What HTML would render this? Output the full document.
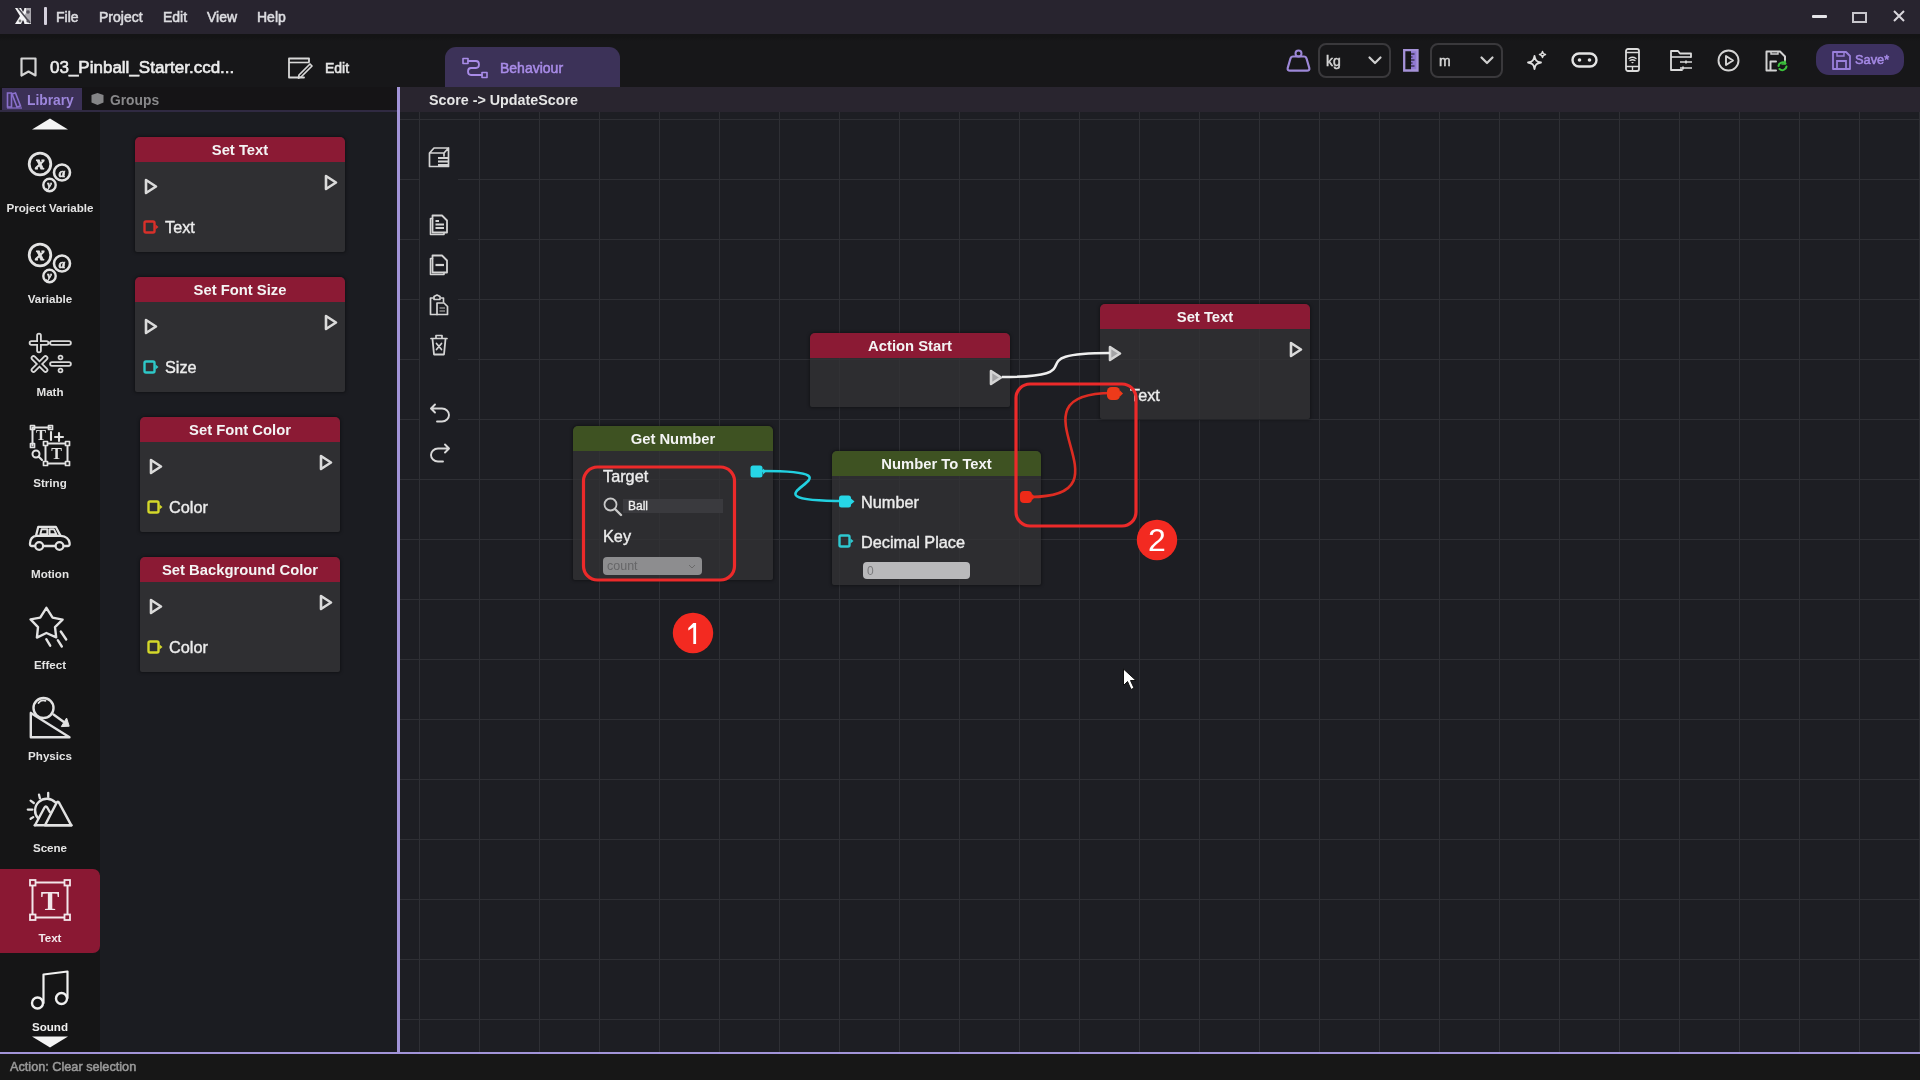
<!DOCTYPE html>
<html><head><meta charset="utf-8">
<style>
*{margin:0;padding:0;box-sizing:border-box}
html,body{width:1920px;height:1080px;overflow:hidden;background:#151416;font-family:"Liberation Sans",sans-serif;color:#e8e8e8}
body{-webkit-font-smoothing:antialiased}
#root{position:absolute;left:0;top:0;width:1920px;height:1080px;will-change:transform}
.a{position:absolute}
svg{position:absolute;overflow:visible}
#title{left:0;top:0;width:1920px;height:34px;background:#28242f}
.menu{top:9px;font-size:14px;line-height:16px;color:#dcdce0;-webkit-text-stroke:0.55px #dcdce0}
#toolbar{left:0;top:33px;width:1920px;height:54px;background:linear-gradient(#28242f 0,#28242f 1px,#141415 1px,#141415 4px,#171719 8px)}
#canvas{left:400px;top:87px;width:1520px;height:965px;background:#1d1e23;overflow:hidden}
#grid{left:0;top:0;width:1520px;height:965px;
 background-image:linear-gradient(to right,#2e2f34 0,#2e2f34 1px,transparent 1px),linear-gradient(to bottom,#2e2f34 0,#2e2f34 1px,transparent 1px);
 background-size:60px 60px;background-position:19px 32px}
#chead{left:0;top:0;width:1520px;height:25px;background:#29252f}
#side{left:0;top:112px;width:100px;height:940px;background:#151516;overflow:hidden}
#panel{left:100px;top:112px;width:297px;height:940px;background:#1b1c21}
#tabs{left:0;top:87px;width:397px;height:25px;background:#151416}
#vline{left:397px;top:87px;width:3px;height:966px;background:#a294d8}
#hline{left:0;top:1052px;width:1920px;height:2px;background:#a294d8}
#status{left:0;top:1054px;width:1920px;height:26px;background:#171717}
.node{position:absolute;background:#2f2f32;border-radius:5px 5px 2px 2px;overflow:hidden;box-shadow:0 0 3px 1px rgba(0,0,0,0.35)}
.nh{position:absolute;left:0;top:0;width:100%;height:25px;text-align:center;font-weight:bold;font-size:14.8px;line-height:26px;color:#f4f4f4}
.red{background:#8b1a34}
.grn{background:#3e5222}
.lbl{position:absolute;font-size:16.3px;line-height:18px;color:#ececec;-webkit-text-stroke:0.4px #ececec}
.sl{position:absolute;left:0;width:100px;text-align:center;font-size:11.6px;line-height:13px;font-weight:bold;color:#e4e4e4}
.ic{fill:none;stroke-linecap:round;stroke-linejoin:round}
.icf{stroke-linecap:round;stroke-linejoin:round}
</style></head><body><div id="root">
<div id="title" class="a">
 <svg style="left:14px;top:7px" width="18" height="18" viewBox="0 0 18 18">
  <rect x="10" y="1" width="7" height="16" fill="#a9a7ad"/>
  <path d="M1 1 L7 1 L9 5 L11 1 L12 1 L12 6 L10 9 L17 17 L11 17 L9 13 L7 17 L1 17 L6 9 Z" fill="#f4f4f6"/>
  <path d="M4 1 L16 16" stroke="#4a4850" stroke-width="1.6"/>
  <circle cx="14" cy="5" r="1.8" fill="#55525c"/><circle cx="14" cy="14" r="1.6" fill="#55525c"/><circle cx="6" cy="14" r="1.4" fill="#777"/>
 </svg>
 <div class="a" style="left:44px;top:7px;width:3px;height:18px;background:#d4d0dc;border-radius:1px"></div>
 <div class="a menu" style="left:56px">File</div>
 <div class="a menu" style="left:99px">Project</div>
 <div class="a menu" style="left:163px">Edit</div>
 <div class="a menu" style="left:207px">View</div>
 <div class="a menu" style="left:257px">Help</div>
 <div class="a" style="left:1812px;top:15px;width:15px;height:3px;background:#e4e4e8;border-radius:1px"></div>
 <div class="a" style="left:1852px;top:12px;width:15px;height:11px;border:2px solid #c8c6cc"></div>
 <svg style="left:1893px;top:10px" width="12" height="12" viewBox="0 0 12 12"><path d="M1 1L11 11M11 1L1 11" stroke="#d8d6dc" stroke-width="2"/></svg>
</div>
<div id="toolbar" class="a">
 <svg style="left:20px;top:24px" width="17" height="20" viewBox="0 0 17 20"><path d="M1.5 1.5H15.5V18.5L8.5 14.5L1.5 18.5Z" class="ic" stroke="#d4d4d4" stroke-width="2.2"/></svg>
 <div class="a" style="left:50px;top:25px;font-size:17px;line-height:20px;color:#ececec;-webkit-text-stroke:0.6px #ececec">03_Pinball_Starter.ccd...</div>
 <svg style="left:287px;top:23px" width="26" height="24" viewBox="0 0 26 24">
  <path d="M17 21.5H2V2.5H22V6" class="ic" stroke="#d8d8d8" stroke-width="1.8"/>
  <path d="M2 6.5H22" stroke="#d8d8d8" stroke-width="1.6"/>
  <path d="M12 19L23 8L25 10L14 21L11.5 22Z" class="ic" stroke="#d8d8d8" stroke-width="1.7"/>
 </svg>
 <div class="a" style="left:325px;top:27px;font-size:14px;line-height:16px;color:#e6e6e6;-webkit-text-stroke:0.55px #e6e6e6">Edit</div>
 <div class="a" style="left:445px;top:14px;width:175px;height:40px;background:#3c3258;border-radius:11px 11px 0 0"></div>
 <svg style="left:462px;top:24px" width="26" height="22" viewBox="0 0 26 22">
  <rect x="1" y="1.5" width="5" height="5" class="ic" stroke="#a98ce8" stroke-width="1.6"/>
  <rect x="20" y="15.5" width="5" height="5" class="ic" stroke="#a98ce8" stroke-width="1.6"/>
  <path d="M6 4H14C18 4 18 11 14 11H9C5 11 5 18 9 18H20" class="ic" stroke="#a98ce8" stroke-width="1.8"/>
 </svg>
 <div class="a" style="left:500px;top:27px;font-size:14px;line-height:16px;color:#a98ce8;-webkit-text-stroke:0.5px #a98ce8">Behaviour</div>

 <svg style="left:1287px;top:16px" width="24" height="23" viewBox="0 0 24 23">
  <circle cx="11.5" cy="4.6" r="3" fill="none" stroke="#9d88d8" stroke-width="2"/>
  <path d="M6 7.5H17C18.5 7.5 19.2 8.3 19.6 9.7L22.3 19C22.7 20.8 21.8 21.6 20 21.6H3C1.2 21.6 0.3 20.8 0.7 19L3.4 9.7C3.8 8.3 4.5 7.5 6 7.5Z" fill="none" stroke="#9d88d8" stroke-width="2.2" stroke-linejoin="round"/>
 </svg>
 <div class="a" style="left:1318px;top:10px;width:73px;height:35px;border:2px solid #3a393c;border-radius:8px"></div>
 <div class="a" style="left:1326px;top:20px;font-size:14px;line-height:16px;color:#d4d4d4;-webkit-text-stroke:0.5px #d4d4d4">kg</div>
 <svg style="left:1368px;top:23px" width="14" height="9" viewBox="0 0 14 9"><path d="M1.5 1.5L7 7L12.5 1.5" class="ic" stroke="#cfcfcf" stroke-width="2.2"/></svg>
 <svg style="left:1403px;top:16px" width="16" height="23" viewBox="0 0 16 23">
  <rect x="8" y="2" width="6.5" height="19" fill="#8f78d0"/>
  <path d="M1.2 1.2H14.5V21.5H1.2Z" fill="none" stroke="#a592d8" stroke-width="2.3"/>
  <path d="M4 5H11.5M4 8H9.5M4 11H11.5M4 14H9.5M4 17H11.5" stroke="#151416" stroke-width="1.2"/>
 </svg>
 <div class="a" style="left:1430px;top:10px;width:73px;height:35px;border:2px solid #3a393c;border-radius:8px"></div>
 <div class="a" style="left:1439px;top:20px;font-size:14px;line-height:16px;color:#d4d4d4;-webkit-text-stroke:0.5px #d4d4d4">m</div>
 <svg style="left:1480px;top:23px" width="14" height="9" viewBox="0 0 14 9"><path d="M1.5 1.5L7 7L12.5 1.5" class="ic" stroke="#cfcfcf" stroke-width="2.2"/></svg>

 <svg style="left:1526px;top:17px" width="22" height="21" viewBox="0 0 22 21">
  <path d="M8.5 6C9.2 10.5 10.5 11.8 15 12.5C10.5 13.2 9.2 14.5 8.5 19C7.8 14.5 6.5 13.2 2 12.5C6.5 11.8 7.8 10.5 8.5 6Z" class="ic" stroke="#e0e0e0" stroke-width="1.8"/>
  <path d="M16.5 1.5C16.8 3.6 17.4 4.2 19.5 4.5C17.4 4.8 16.8 5.4 16.5 7.5C16.2 5.4 15.6 4.8 13.5 4.5C15.6 4.2 16.2 3.6 16.5 1.5Z" class="ic" stroke="#e0e0e0" stroke-width="1.5"/>
 </svg>
 <svg style="left:1571px;top:19px" width="27" height="16" viewBox="0 0 27 16">
  <rect x="1.5" y="1.5" width="24" height="13" rx="6.5" class="ic" stroke="#e4e4e4" stroke-width="2.4"/>
  <circle cx="8.5" cy="8" r="1.8" fill="#e4e4e4"/><circle cx="18.5" cy="8" r="1.8" fill="#e4e4e4"/>
 </svg>
 <svg style="left:1625px;top:15px" width="15" height="24" viewBox="0 0 15 24">
  <rect x="1" y="1" width="13" height="22" rx="2" class="ic" stroke="#dcdcdc" stroke-width="1.8"/>
  <path d="M1 4.5H14M1 18.5H14M7.5 18.5V23" stroke="#dcdcdc" stroke-width="1.4"/>
  <path d="M4 10.5Q7.5 8 11 10.5M5 12.5Q7.5 11 10 12.5" class="ic" stroke="#dcdcdc" stroke-width="1.4"/>
  <path d="M6 14H9L7.5 15.5Z" fill="#dcdcdc"/>
 </svg>
 <svg style="left:1670px;top:16px" width="23" height="22" viewBox="0 0 23 22">
  <path d="M12 21H1V2H8L10 4.5H21V8" class="ic" stroke="#dcdcdc" stroke-width="1.8"/>
  <path d="M1 8H21" stroke="#dcdcdc" stroke-width="1.6"/>
  <path d="M10 13H22M10 19H22M16 11.5V14.5M13 17.5V20.5" stroke="#dcdcdc" stroke-width="1.7"/>
 </svg>
 <svg style="left:1717px;top:16px" width="23" height="23" viewBox="0 0 23 23">
  <circle cx="11.5" cy="11.5" r="10" class="ic" stroke="#d4d4d4" stroke-width="1.9"/>
  <path d="M9 7L16 11.5L9 16Z" class="ic" stroke="#d4d4d4" stroke-width="1.9"/>
 </svg>
 <svg style="left:1765px;top:17px" width="24" height="22" viewBox="0 0 24 22">
  <path d="M11 20.5H1.5V1.5H15L20 6.5V11" class="ic" stroke="#d2d2d2" stroke-width="2"/>
  <path d="M5.5 20V11.5H11" class="ic" stroke="#d2d2d2" stroke-width="2"/>
  <path d="M6 2V4H13V2" stroke="#d2d2d2" stroke-width="1.4" fill="none"/>
  <path d="M13.5 16A4.2 4.2 0 0 1 20.5 13.5M21.5 16.5A4.2 4.2 0 0 1 14.5 19" class="ic" stroke="#3cc23c" stroke-width="2"/>
  <path d="M20 11V14H17" class="ic" stroke="#3cc23c" stroke-width="1.6"/>
 </svg>
 <div class="a" style="left:1816px;top:11px;width:88px;height:31px;background:#3d3160;border-radius:13px"></div>
 <svg style="left:1832px;top:18px" width="19" height="19" viewBox="0 0 19 19">
  <path d="M1 1H14L18 5V18H1Z" class="ic" stroke="#9a80dc" stroke-width="1.8"/>
  <path d="M5 18V10H14V18" fill="none" stroke="#9a80dc" stroke-width="1.8"/>
  <path d="M5 1V5H12V1" fill="none" stroke="#9a80dc" stroke-width="1.4"/>
 </svg>
 <div class="a" style="left:1855px;top:19px;font-size:12.8px;line-height:15px;color:#a68ae6;-webkit-text-stroke:0.5px #a68ae6">Save*</div>
</div>
<div id="tabs" class="a">
 <div class="a" style="left:2px;top:1px;width:80px;height:23px;background:#3b3056"></div>
 <svg style="left:6px;top:4px" width="17" height="18" viewBox="0 0 17 18">
  <path d="M1.5 2H5.5V16H1.5Z" fill="none" stroke="#8a70cc" stroke-width="1.6"/>
  <path d="M6 3L9.5 2L14.5 15L11 16Z" fill="none" stroke="#8a70cc" stroke-width="1.6"/>
  <path d="M1 17H16" stroke="#8a70cc" stroke-width="1.2"/>
 </svg>
 <div class="a" style="left:27px;top:6px;font-size:13.8px;line-height:16px;font-weight:bold;color:#9d86dc">Library</div>
 <svg style="left:90px;top:5px" width="15" height="14" viewBox="0 0 15 14">
  <path d="M7.5 1L13.5 3V10.5L7.5 13L1.5 10.5V3Z" fill="#858587"/>
 </svg>
 <div class="a" style="left:110px;top:6px;font-size:13.8px;line-height:16px;font-weight:bold;color:#89898b">Groups</div>
 <div class="a" style="left:0;top:23px;width:397px;height:2px;background:#302a42"></div>
</div>
<div id="side" class="a">
 <svg style="left:32px;top:6px" width="36" height="12" viewBox="0 0 36 12"><path d="M0 11.5L18 0.5L36 11.5Z" fill="#f4f4f4"/></svg>
 <!-- project variable -->
 <svg style="left:27px;top:40px" width="46" height="42" viewBox="0 0 46 42" stroke="#e2e2e2">
  <circle cx="13" cy="12" r="10.8" fill="none" stroke-width="2.8"/>
  <text stroke="#e2e2e2" stroke-width="1" x="13" y="17" text-anchor="middle" font-family="Liberation Serif" font-style="italic" font-weight="bold" font-size="18" fill="#e2e2e2">x</text>
  <circle cx="35" cy="20.5" r="8" fill="#151516" stroke-width="2.6"/>
  <text stroke="#e2e2e2" stroke-width="0.6" x="35" y="25" text-anchor="middle" font-family="Liberation Serif" font-style="italic" font-weight="bold" font-size="13" fill="#e2e2e2">a</text>
  <circle cx="22.5" cy="33" r="6.2" fill="#151516" stroke-width="2.4"/>
  <text stroke="#e2e2e2" stroke-width="0.6" x="22.5" y="36" text-anchor="middle" font-family="Liberation Serif" font-style="italic" font-weight="bold" font-size="10" fill="#e2e2e2">y</text>
 </svg>
 <div class="sl" style="top:89px">Project Variable</div>
 <!-- variable -->
 <svg style="left:27px;top:131px" width="46" height="42" viewBox="0 0 46 42" stroke="#e2e2e2">
  <circle cx="13" cy="12" r="10.8" fill="none" stroke-width="2.8"/>
  <text stroke="#e2e2e2" stroke-width="1" x="13" y="17" text-anchor="middle" font-family="Liberation Serif" font-style="italic" font-weight="bold" font-size="18" fill="#e2e2e2">x</text>
  <circle cx="35" cy="20.5" r="8" fill="#151516" stroke-width="2.6"/>
  <text stroke="#e2e2e2" stroke-width="0.6" x="35" y="25" text-anchor="middle" font-family="Liberation Serif" font-style="italic" font-weight="bold" font-size="13" fill="#e2e2e2">a</text>
  <circle cx="22.5" cy="33" r="6.2" fill="#151516" stroke-width="2.4"/>
  <text stroke="#e2e2e2" stroke-width="0.6" x="22.5" y="36" text-anchor="middle" font-family="Liberation Serif" font-style="italic" font-weight="bold" font-size="10" fill="#e2e2e2">y</text>
 </svg>
 <div class="sl" style="top:180px">Variable</div>
 <!-- math -->
 <svg style="left:29px;top:220px" width="42" height="42" viewBox="0 0 42 42">
  <g fill="none" stroke-linecap="round" stroke="#d8d8d8" stroke-width="5.6"><path d="M10 3.5V18.5M2.5 11H17.5M23 11H40M4.5 26L16.5 38M16.5 26L4.5 38M23 32H40"/></g>
  <g fill="none" stroke-linecap="round" stroke="#151516" stroke-width="2"><path d="M10 3.5V18.5M2.5 11H17.5M23 11H40M4.5 26L16.5 38M16.5 26L4.5 38M23 32H40"/></g>
  <circle cx="31.5" cy="25.5" r="2.8" fill="#d8d8d8"/><circle cx="31.5" cy="38.5" r="2.8" fill="#d8d8d8"/>
  <circle cx="31.5" cy="25.5" r="1.1" fill="#151516"/><circle cx="31.5" cy="38.5" r="1.1" fill="#151516"/>
 </svg>
 <div class="sl" style="top:273px">Math</div>
 <!-- string -->
 <svg style="left:29px;top:312px" width="42" height="42" viewBox="0 0 42 42" stroke="#e2e2e2" stroke-width="2">
  <path d="M3.5 3.5H21.5M3.5 3.5V21.5" class="ic" stroke-width="2"/>
  <rect x="1.5" y="1.5" width="4" height="4" class="ic" stroke-width="1.7"/><rect x="19.5" y="1.5" width="4" height="4" class="ic" stroke-width="1.7"/><rect x="1.5" y="19.5" width="4" height="4" class="ic" stroke-width="1.7"/>
  <text stroke="none" x="12" y="16" text-anchor="middle" font-family="Liberation Serif" font-weight="bold" font-size="15" fill="#e2e2e2">T</text>
  <path d="M22 8V16M30 9V17M26 13H34" class="ic" stroke-width="2.1"/>
  <rect x="16.5" y="19.5" width="22" height="20" class="ic" stroke-width="2"/>
  <rect x="14.5" y="17.5" width="4" height="4" class="icf" fill="#151516" stroke-width="1.7"/><rect x="36.5" y="17.5" width="4" height="4" class="icf" fill="#151516" stroke-width="1.7"/><rect x="14.5" y="37.5" width="4" height="4" class="icf" fill="#151516" stroke-width="1.7"/><rect x="36.5" y="37.5" width="4" height="4" class="icf" fill="#151516" stroke-width="1.7"/>
  <text stroke="none" x="27.5" y="35" text-anchor="middle" font-family="Liberation Serif" font-weight="bold" font-size="16" fill="#e2e2e2">T</text>
  <circle cx="7" cy="30" r="3.5" class="ic" stroke-width="2"/><path d="M9.5 32.5L13 36" class="ic" stroke-width="2.1"/>
 </svg>
 <div class="sl" style="top:364px">String</div>
 <!-- motion car -->
 <svg style="left:29px;top:413px" width="43" height="27" viewBox="0 0 43 27" stroke="#e2e2e2">
  <path d="M7 10.8L9.3 1.8H26.8L31.5 10.8" class="ic" stroke-width="2.3"/>
  <path d="M5.8 21H2.5C1.2 21 0.9 20 1 18.5C1.2 13.8 3.5 11.2 7.5 10.8H31.7C37 11.2 40 13.8 40.6 18C40.9 20 40.3 21 39 21H34.8M14.5 21H26.2" class="ic" stroke-width="2.3"/>
  <path d="M11.3 9.3L12.6 4.3H18.3V9.3ZM20.6 9.3V4.3H25L27.4 9.3Z" class="ic" stroke-width="1.9"/>
  <circle cx="10.2" cy="21" r="3.9" class="ic" stroke-width="2.2"/><circle cx="30.5" cy="21" r="3.9" class="ic" stroke-width="2.2"/>
 </svg>
 <div class="sl" style="top:455px">Motion</div>
 <!-- effect star -->
 <svg style="left:28px;top:494px" width="42" height="43" viewBox="0 0 42 43" stroke="#e2e2e2">
  <path d="M18.4 1.8L24.6 11.6L34.6 13.6L27 21.2L28.2 31.3L18.4 27L8.9 31.6L10 21.2L2.6 13.4L12.2 11.6Z" class="ic" stroke-width="2.4"/>
  <path d="M18.3 33.2L22.2 39.7M29.8 34.2L33.8 40.5M32.8 25.5L38.2 33.5" class="ic" stroke-width="2.4"/>
 </svg>
 <div class="sl" style="top:546px">Effect</div>
 <!-- physics -->
 <svg style="left:29px;top:584px" width="42" height="43" viewBox="0 0 42 43" stroke="#e2e2e2">
  <path d="M1.8 17V41.2H40.5L1.8 17" class="ic" stroke-width="2.4"/>
  <circle cx="14.5" cy="12" r="10" fill="#151516" class="icf" stroke-width="2.4"/>
  <path d="M9.5 7A6 6 0 0 1 16.5 4.8" class="ic" stroke-width="1.8"/>
  <path d="M24.5 18.5L34.5 25.8" class="ic" stroke-width="2.4"/><path d="M32.3 30.6L37.6 22L40.2 30.2Z" fill="#e2e2e2" stroke="#e2e2e2" stroke-width="1" stroke-linejoin="round"/>
 </svg>
 <div class="sl" style="top:637px">Physics</div>
 <!-- scene -->
 <svg style="left:27px;top:679px" width="46" height="37" viewBox="0 0 46 37" stroke="#e2e2e2">
  <path d="M11.2 27.5A11 11 0 0 1 28.5 11.5" class="ic" stroke-width="2.4"/>
  <path d="M8 34.3L17.5 16.5Q18.8 14.3 20.2 16.5L22.8 21" class="ic" stroke-width="2.4"/>
  <path d="M18 34.3L29.5 12Q30.8 9.6 32.2 12L44.3 34.3Z" class="ic" stroke-width="2.5"/>
  <path d="M7.8 34.3H44.3" class="ic" stroke-width="2.5"/>
  <path d="M0.8 18.6H5.4M3.6 9.6L6.8 12M12 3.6L12.9 7.2M21.2 1.8V6M3.6 27.8L6.2 26.1" class="ic" stroke-width="2.3"/>
 </svg>
 <div class="sl" style="top:729px">Scene</div>
 <!-- text selected -->
 <div class="a" style="left:0;top:757px;width:100px;height:84px;background:#8a1833;border-radius:0 7px 7px 0"></div>
 <svg style="left:29px;top:767px" width="42" height="42" viewBox="0 0 42 42">
  <path d="M6 3.5H36M6 38.5H36M3.5 6V36M38.5 6V36" stroke="#f2e6ea" stroke-width="2"/>
  <rect x="1" y="1" width="5.5" height="5.5" fill="#8a1833" stroke="#f2e6ea" stroke-width="1.8"/>
  <rect x="35.5" y="1" width="5.5" height="5.5" fill="#8a1833" stroke="#f2e6ea" stroke-width="1.8"/>
  <rect x="1" y="35.5" width="5.5" height="5.5" fill="#8a1833" stroke="#f2e6ea" stroke-width="1.8"/>
  <rect x="35.5" y="35.5" width="5.5" height="5.5" fill="#8a1833" stroke="#f2e6ea" stroke-width="1.8"/>
  <text x="21" y="31" text-anchor="middle" font-family="Liberation Serif" font-weight="bold" font-size="28" fill="#f2e6ea">T</text>
 </svg>
 <div class="sl" style="top:819px;color:#f2e8ec">Text</div>
 <!-- sound -->
 <svg style="left:30px;top:858px" width="40" height="40" viewBox="0 0 40 40" stroke="#e2e2e2" stroke-width="2">
  <path d="M13.5 33V4.5L37.5 1.5V28" class="ic" stroke-width="2.2" stroke="#f0f0f0"/>
  <circle cx="7.5" cy="33" r="5.5" class="ic" stroke-width="2.4" stroke="#f0f0f0"/>
  <circle cx="31.5" cy="28.5" r="5.5" class="ic" stroke-width="2.4" stroke="#f0f0f0"/>
 </svg>
 <div class="sl" style="top:908px;color:#f0f0f0">Sound</div>
 <div class="a" style="left:0;top:919px;width:100px;height:21px;background:#151516"></div>
 <svg style="left:32px;top:924px" width="36" height="12" viewBox="0 0 36 12"><path d="M0 0.5L18 11.5L36 0.5Z" fill="#f4f4f4"/></svg>
</div>
<div id="panel" class="a"></div>
<!-- library nodes -->
<div class="node" style="left:135px;top:137px;width:210px;height:115px">
 <div class="nh red">Set Text</div>
 <svg style="left:9px;top:41px" width="14" height="17" viewBox="0 0 14 17"><path d="M2 2L12 8.5L2 15Z" fill="none" stroke="#dadada" stroke-width="2.6" stroke-linejoin="round"/></svg>
 <svg style="left:189px;top:37px" width="14" height="17" viewBox="0 0 14 17"><path d="M2 2L12 8.5L2 15Z" fill="none" stroke="#dadada" stroke-width="2.6" stroke-linejoin="round"/></svg>
 <svg style="left:8px;top:83px" width="16" height="14" viewBox="0 0 16 14"><rect x="1.5" y="1.5" width="10" height="11" rx="1.5" fill="none" stroke="#d8302a" stroke-width="2.4"/><path d="M12.5 4.5L15.5 7L12.5 9.5Z" fill="#d8302a"/></svg>
 <div class="lbl" style="left:30px;top:81px">Text</div>
</div>
<div class="node" style="left:135px;top:277px;width:210px;height:115px">
 <div class="nh red">Set Font Size</div>
 <svg style="left:9px;top:41px" width="14" height="17" viewBox="0 0 14 17"><path d="M2 2L12 8.5L2 15Z" fill="none" stroke="#dadada" stroke-width="2.6" stroke-linejoin="round"/></svg>
 <svg style="left:189px;top:37px" width="14" height="17" viewBox="0 0 14 17"><path d="M2 2L12 8.5L2 15Z" fill="none" stroke="#dadada" stroke-width="2.6" stroke-linejoin="round"/></svg>
 <svg style="left:8px;top:83px" width="16" height="14" viewBox="0 0 16 14"><rect x="1.5" y="1.5" width="10" height="11" rx="1.5" fill="none" stroke="#2ec8c8" stroke-width="2.4"/><path d="M12.5 4.5L15.5 7L12.5 9.5Z" fill="#2ec8c8"/></svg>
 <div class="lbl" style="left:30px;top:81px">Size</div>
</div>
<div class="node" style="left:140px;top:417px;width:200px;height:115px">
 <div class="nh red">Set Font Color</div>
 <svg style="left:9px;top:41px" width="14" height="17" viewBox="0 0 14 17"><path d="M2 2L12 8.5L2 15Z" fill="none" stroke="#dadada" stroke-width="2.6" stroke-linejoin="round"/></svg>
 <svg style="left:179px;top:37px" width="14" height="17" viewBox="0 0 14 17"><path d="M2 2L12 8.5L2 15Z" fill="none" stroke="#dadada" stroke-width="2.6" stroke-linejoin="round"/></svg>
 <svg style="left:7px;top:83px" width="16" height="14" viewBox="0 0 16 14"><rect x="1.5" y="1.5" width="10" height="11" rx="1.5" fill="none" stroke="#d4d82a" stroke-width="2.4"/><path d="M12.5 4.5L15.5 7L12.5 9.5Z" fill="#d4d82a"/></svg>
 <div class="lbl" style="left:29px;top:81px">Color</div>
</div>
<div class="node" style="left:140px;top:557px;width:200px;height:115px">
 <div class="nh red">Set Background Color</div>
 <svg style="left:9px;top:41px" width="14" height="17" viewBox="0 0 14 17"><path d="M2 2L12 8.5L2 15Z" fill="none" stroke="#dadada" stroke-width="2.6" stroke-linejoin="round"/></svg>
 <svg style="left:179px;top:37px" width="14" height="17" viewBox="0 0 14 17"><path d="M2 2L12 8.5L2 15Z" fill="none" stroke="#dadada" stroke-width="2.6" stroke-linejoin="round"/></svg>
 <svg style="left:7px;top:83px" width="16" height="14" viewBox="0 0 16 14"><rect x="1.5" y="1.5" width="10" height="11" rx="1.5" fill="none" stroke="#d4d82a" stroke-width="2.4"/><path d="M12.5 4.5L15.5 7L12.5 9.5Z" fill="#d4d82a"/></svg>
 <div class="lbl" style="left:29px;top:81px">Color</div>
</div>
<div id="canvas" class="a">
 <div id="grid" class="a"></div>
 <div class="a" style="left:-400px;top:-87px;width:1920px;height:1080px">
  <!-- toolbar column -->
  <div class="a" style="left:420px;top:121px;width:38px;height:357px;background:#1d1e23"></div>
  <svg style="left:428px;top:146px" width="22" height="22" viewBox="0 0 22 22">
   <path d="M1.5 20.5V7L6 2H20.5V20.5Z M1.5 7H16L20.5 2 M16 7V10" class="ic" stroke="#d4d4d4" stroke-width="1.7"/>
   <path d="M10 12H21M10 15.5H21M10 19H21" stroke="#d4d4d4" stroke-width="1.8"/>
  </svg>
  <svg style="left:429px;top:214px" width="20" height="22" viewBox="0 0 20 22">
   <path d="M3.5 4.5H1.5V20.5H15V18.5" class="ic" stroke="#d4d4d4" stroke-width="1.6"/>
   <path d="M3.5 1.5H13L18 6.5V18.5H3.5Z" class="ic" stroke="#d4d4d4" stroke-width="1.8"/>
   <path d="M6.5 7H10M6.5 10.5H15M6.5 14H15" stroke="#d4d4d4" stroke-width="1.8"/>
  </svg>
  <svg style="left:429px;top:254px" width="20" height="22" viewBox="0 0 20 22">
   <path d="M3.5 4.5H1.5V20.5H15V18.5" class="ic" stroke="#d4d4d4" stroke-width="1.6"/>
   <path d="M3.5 1.5H13L18 6.5V18.5H3.5Z" class="ic" stroke="#d4d4d4" stroke-width="1.8"/>
   <path d="M6.5 11H15" stroke="#d4d4d4" stroke-width="2.2"/>
  </svg>
  <svg style="left:429px;top:294px" width="20" height="22" viewBox="0 0 20 22">
   <path d="M5 4H1.5V20.5H8" class="ic" stroke="#d4d4d4" stroke-width="1.7"/>
   <path d="M5 5.5V2.5L8 1L11 2.5V5.5Z" class="ic" stroke="#d4d4d4" stroke-width="1.6"/>
   <path d="M12 4H14.5V8" class="ic" stroke="#d4d4d4" stroke-width="1.6"/>
   <path d="M8 9H15L18.5 12.5V20.5H8Z" class="ic" stroke="#d4d4d4" stroke-width="1.7"/>
   <path d="M10.5 14H16M10.5 17H16" stroke="#8a8a8a" stroke-width="1.6"/>
  </svg>
  <svg style="left:430px;top:334px" width="18" height="22" viewBox="0 0 18 22">
   <path d="M1 4.5H17M6 4V1.5H12V4" class="ic" stroke="#d4d4d4" stroke-width="1.7"/>
   <path d="M2.5 5L4 20.5H14L15.5 5" class="ic" stroke="#d4d4d4" stroke-width="1.8"/>
   <path d="M6.5 9.5L11.5 15.5M11.5 9.5L6.5 15.5" class="ic" stroke="#d4d4d4" stroke-width="1.7"/>
  </svg>
  <svg style="left:429px;top:403px" width="22" height="20" viewBox="0 0 22 20">
   <path d="M6 1.5L2 5.5L6 9.5M2.5 5.5H13C17 5.5 20 8.5 20 12S17 18.5 13 18.5H8" class="ic" stroke="#d8d8d8" stroke-width="1.9"/>
  </svg>
  <svg style="left:429px;top:443px" width="22" height="20" viewBox="0 0 22 20">
   <path d="M16 1.5L20 5.5L16 9.5M19.5 5.5H9C5 5.5 2 8.5 2 12S5 18.5 9 18.5H14" class="ic" stroke="#d8d8d8" stroke-width="1.9"/>
  </svg>
 </div>
 <div id="chead" class="a"><div class="a" style="left:29px;top:5px;font-size:14.3px;line-height:16px;font-weight:bold;color:#e6e6e6">Score -&gt; UpdateScore</div></div>
</div>
<!-- canvas nodes -->
<div class="node" style="left:810px;top:333px;width:200px;height:74px;background:rgba(50,50,53,0.76)">
 <div class="nh red">Action Start</div>
 <svg style="left:179px;top:36px" width="14" height="17" viewBox="0 0 14 17"><path d="M2 2L12 8.5L2 15Z" fill="#a4a4a6" stroke="#d4d4d4" stroke-width="2.6" stroke-linejoin="round"/></svg>
</div>
<div class="node" style="left:1100px;top:304px;width:210px;height:115px;background:rgba(50,50,53,0.76)">
 <div class="nh red">Set Text</div>
 <svg style="left:8px;top:41px" width="14" height="17" viewBox="0 0 14 17"><path d="M2 2L12 8.5L2 15Z" fill="#a4a4a6" stroke="#d4d4d4" stroke-width="2.6" stroke-linejoin="round"/></svg>
 <svg style="left:189px;top:37px" width="14" height="17" viewBox="0 0 14 17"><path d="M2 2L12 8.5L2 15Z" fill="none" stroke="#dadada" stroke-width="2.6" stroke-linejoin="round"/></svg>
 <div class="lbl" style="left:30px;top:82px">Text</div>
</div>
<div class="node" style="left:573px;top:426px;width:200px;height:154px;background:rgba(50,50,53,0.76)">
 <div class="nh grn">Get Number</div>
 <div class="lbl" style="left:30px;top:41px">Target</div>
 <svg style="left:30px;top:71px" width="20" height="20" viewBox="0 0 20 20"><circle cx="7.5" cy="7.5" r="6" fill="none" stroke="#c8c8c8" stroke-width="1.8"/><path d="M12 12L18 18" stroke="#c8c8c8" stroke-width="2.4" stroke-linecap="round"/></svg>
 <div class="a" style="left:50px;top:73px;width:100px;height:14px;background:#3a3a3e"></div>
 <div class="a" style="left:55px;top:74px;font-size:12px;line-height:13px;color:#f0f0f0;-webkit-text-stroke:0.3px #f0f0f0">Ball</div>
 <div class="lbl" style="left:30px;top:101px">Key</div>
 <div class="a" style="left:30px;top:131px;width:99px;height:18px;background:#8d8d8f;border-radius:4px"></div>
 <div class="a" style="left:34px;top:133px;font-size:12.5px;line-height:14px;color:#666668">count</div>
 <svg style="left:115px;top:138px" width="8" height="5" viewBox="0 0 8 5"><path d="M1 1L4 4L7 1" fill="none" stroke="#6a6a6a" stroke-width="1"/></svg>
</div>
<div class="node" style="left:832px;top:451px;width:209px;height:134px;background:rgba(50,50,53,0.76)">
 <div class="nh grn">Number To Text</div>
 <div class="lbl" style="left:29px;top:42px">Number</div>
 <svg style="left:6px;top:83px" width="16" height="14" viewBox="0 0 16 14"><rect x="1.5" y="1.5" width="10" height="11" rx="1.5" fill="none" stroke="#2ec8d0" stroke-width="2.4"/><path d="M12.5 4.5L15.5 7L12.5 9.5Z" fill="#2ec8d0"/></svg>
 <div class="lbl" style="left:29px;top:82px">Decimal Place</div>
 <div class="a" style="left:31px;top:111px;width:107px;height:17px;background:#b9b9bb;border-radius:4px"></div>
 <div class="a" style="left:35px;top:113px;font-size:12px;line-height:14px;color:#7a7a7c">0</div>
</div>
<!-- wires & overlays -->
<svg style="left:0;top:0" width="1920" height="1080" viewBox="0 0 1920 1080">
 <path d="M1002 377C1100 377 1012 353 1110 353" fill="none" stroke="#eeeeee" stroke-width="2.6"/>
 <path d="M762 471C882 471 722 501 845 501" fill="none" stroke="#22d0e0" stroke-width="2.6"/>
 <rect x="750.5" y="465.5" width="12" height="12" rx="2.5" fill="#26d6e6"/>
 <path d="M763 468.5L766 471.5L763 474.5Z" fill="#26d6e6"/>
 <rect x="839" y="495.5" width="12" height="12" rx="2.5" fill="#26d6e6"/>
 <path d="M851 498.5L854.5 501.5L851 504.5Z" fill="#26d6e6"/>
 <path d="M1030 497C1140 497 1000 393 1112 393" fill="none" stroke="#dd2c22" stroke-width="2.6"/>
 <rect x="1020" y="491" width="12" height="12" rx="4" fill="#ee2a18"/>
 <path d="M1032 494L1035 497L1032 500Z" fill="#ee2a18"/>
 <rect x="1107" y="387" width="13" height="13" rx="4.5" fill="#ee3a1a"/>
 <path d="M1120 390.5L1123 393.5L1120 396.5Z" fill="#ee3a1a"/>
 <rect x="583.5" y="467" width="151" height="113" rx="14" fill="none" stroke="#ec2a2a" stroke-width="3.2"/>
 <rect x="1016" y="384" width="120" height="142" rx="14" fill="none" stroke="#ec2a2a" stroke-width="3.2"/>
 <circle cx="693" cy="633" r="20.2" fill="#f32a21"/>
 <path d="M693.3 623H696.1V644H693.3V627.3L688.3 630.6V627.9L693.3 623Z" fill="#ffffff"/>
 <circle cx="1157" cy="540" r="20.2" fill="#f32a21"/>
 <text x="1157" y="550.5" text-anchor="middle" font-family="Liberation Sans" font-size="32" fill="#ffffff">2</text>
 <path d="M1123.5 669V685.5L1127.5 681.5L1131 689.5L1134 688L1130.5 680.5H1136Z" fill="#ffffff" stroke="#111" stroke-width="1" stroke-linejoin="round"/>
</svg>
<div id="vline" class="a"></div>
<div id="hline" class="a"></div>
<div id="status" class="a"><div class="a" style="left:10px;top:6px;font-size:12.7px;line-height:14px;color:#9a9a9a;-webkit-text-stroke:0.5px #9a9a9a">Action: Clear selection</div></div>
</div></body></html>
